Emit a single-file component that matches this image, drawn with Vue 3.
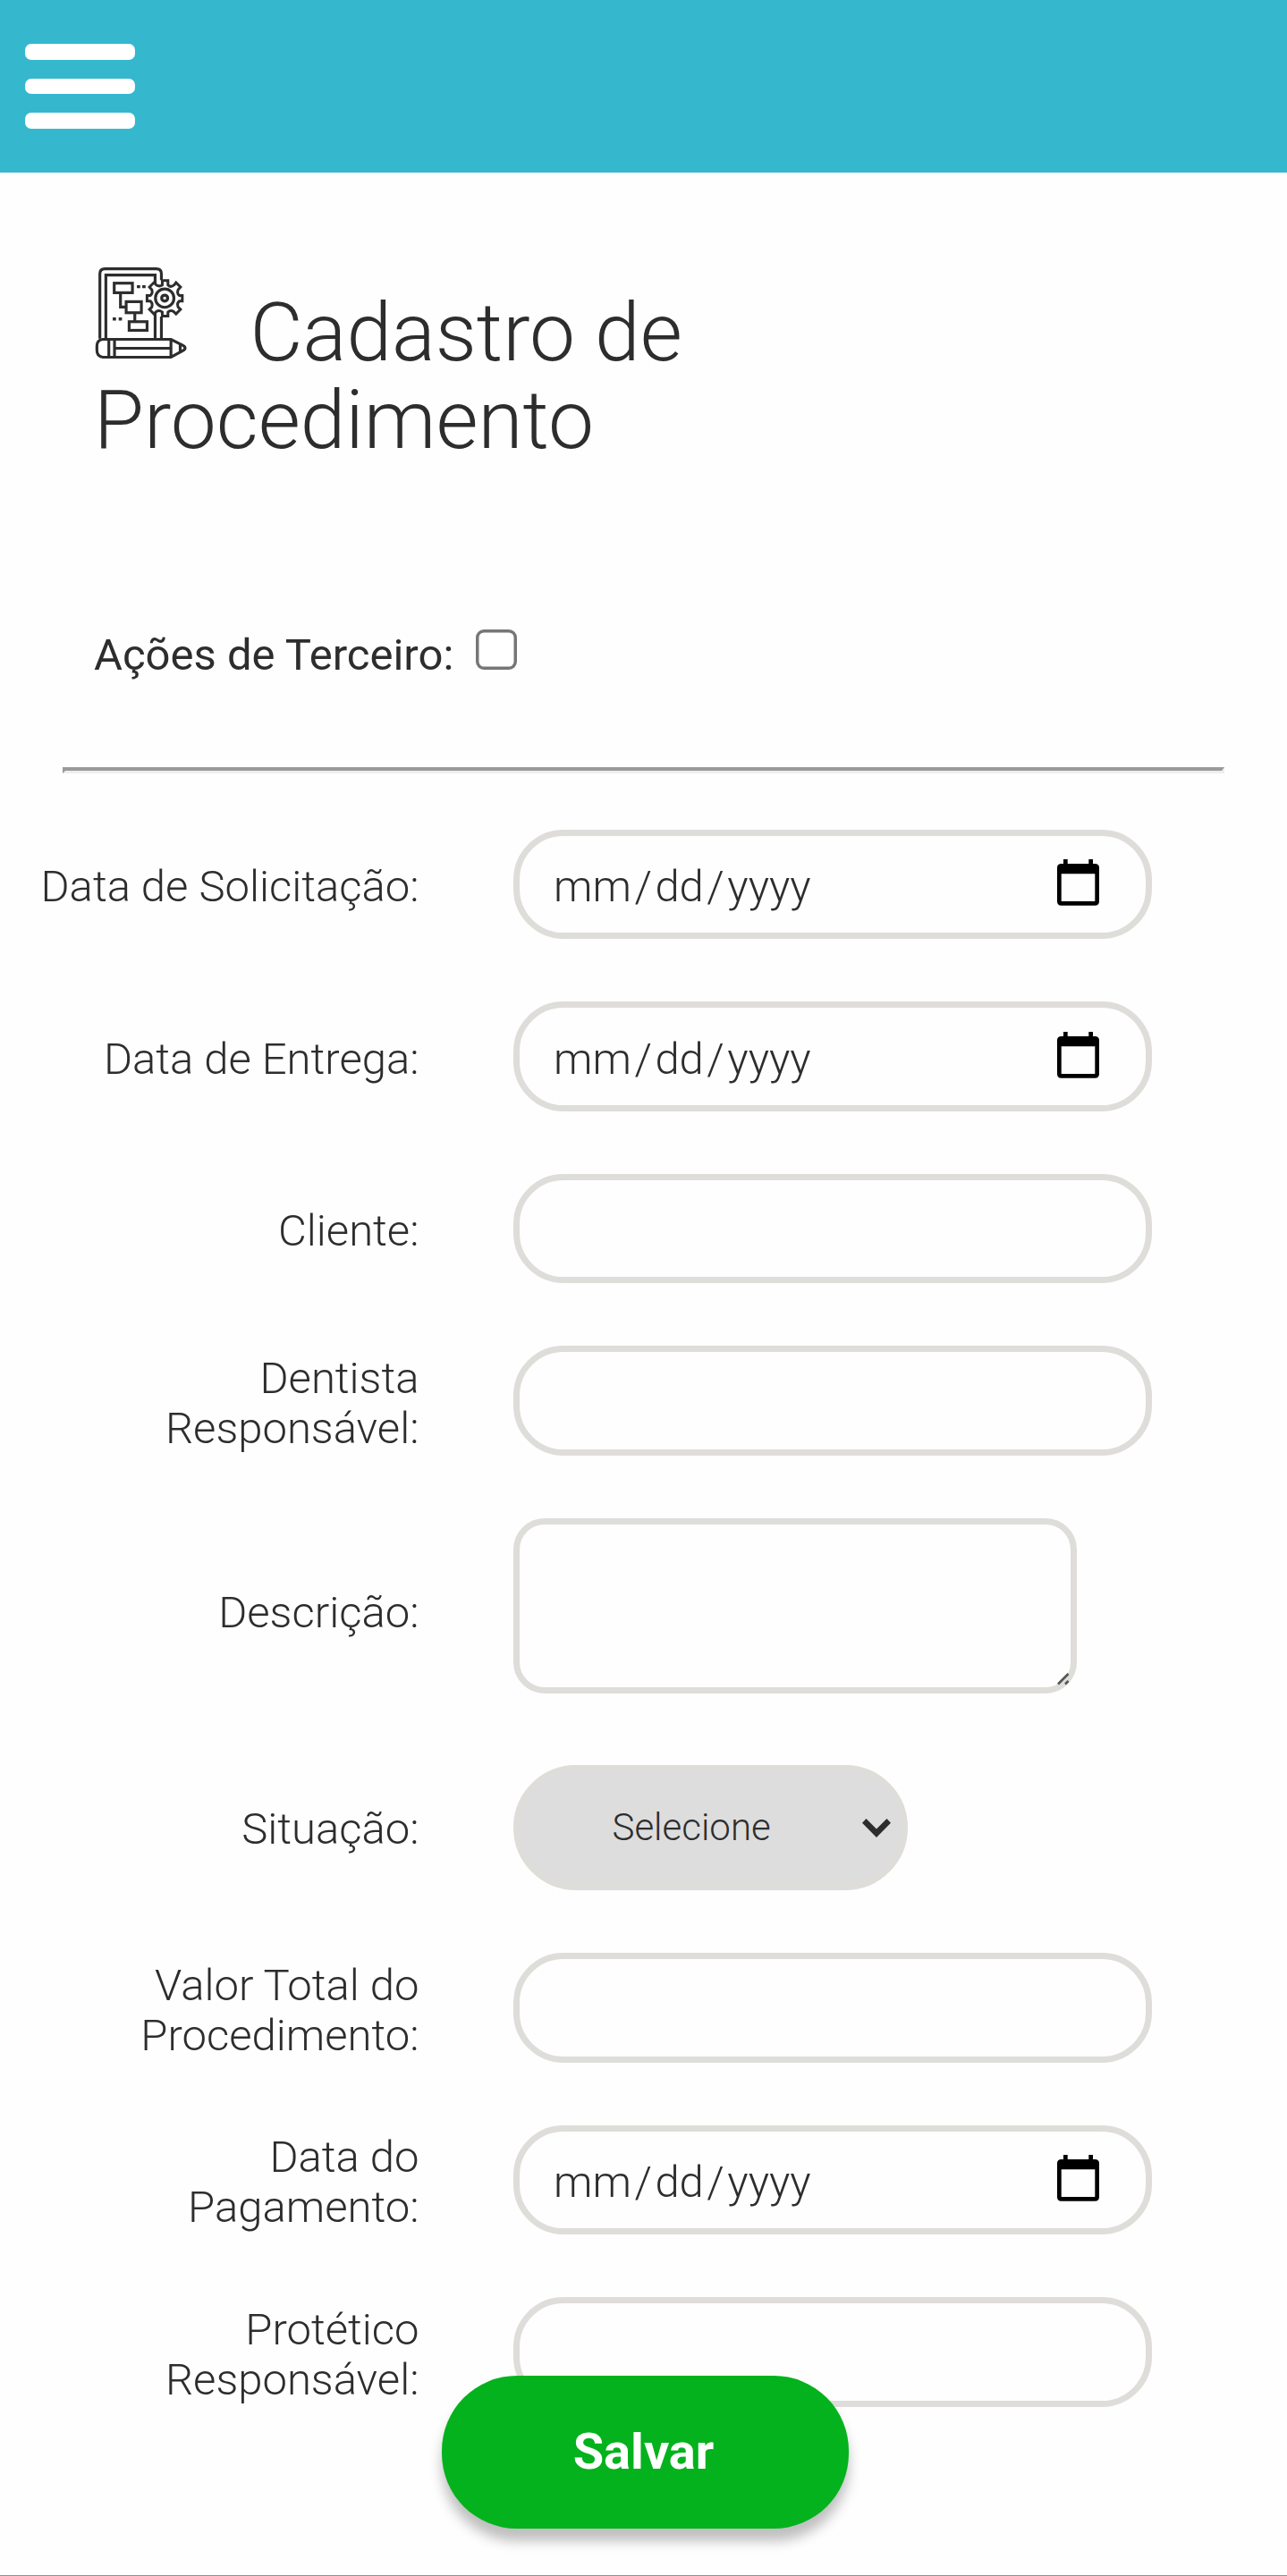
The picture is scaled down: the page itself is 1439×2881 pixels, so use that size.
<script setup>
const fields = [
  { label: 'Data de Solicitação:', type: 'date' },
  { label: 'Data de Entrega:', type: 'date' },
  { label: 'Cliente:', type: 'text' },
  { label: 'Dentista Responsável:', type: 'text' },
  { label: 'Descrição:', type: 'area' },
  { label: 'Situação:', type: 'select' },
  { label: 'Valor Total do Procedimento:', type: 'text' },
  { label: 'Data do Pagamento:', type: 'date' },
  { label: 'Protético Responsável:', type: 'text' },
]
</script>

<template>
  <div class="page">
    <header class="topbar">
      <button class="menu" aria-label="Menu">
        <span class="bar"></span>
        <span class="bar"></span>
        <span class="bar"></span>
      </button>
    </header>

    <h1 class="title">
      <svg class="title-icon" viewBox="48 54 310 310" fill="none" stroke="#2d2d2d" stroke-width="9.500">
        <path d="M65 296V79Q65 62 82 62H254Q271 62 271 79V100M271 222V296" />
        <path d="M85 296V83H250V120M250 203V296" />
        <rect x="113" y="110" width="61" height="32" />
        <rect x="153" y="172" width="51" height="37" />
        <rect x="163" y="239" width="60" height="29" />
        <path d="M134 145V190H150M182 212V237" />
        <path d="M189 122H200M207 122H218M108 230H119M128 230H139" stroke-width="10" />
        <path
          fill="#fefefe"
          stroke-width="9"
          d="M274 101H293V116Q302 126 314 116L320 108L335 123L327 132Q322 145 331 151H341V170H331Q322 177 327 190L335 198L320 213L312 205Q301 199 293 207V220H274V207Q264 199 254 205L246 213L231 198L239 190Q243 177 234 170H223V151H234Q243 145 239 132L231 123L246 108L254 116Q264 123 274 116Z"
        />
        <circle cx="282" cy="160" r="31" />
        <circle cx="282" cy="160" r="10" stroke-width="10" />
        <path d="M75 298H303L342 318Q359 327 342 337L303 358H75Q55 356 55 335V320Q55 300 75 298Z" />
        <path d="M95 298V358M114 298V358M303 298V358M114 328H303M334 314V341" />
      </svg><span class="title-first">Cadastro de</span><br />Procedimento
    </h1>

    <div class="third-party">
      <span>Ações de Terceiro:</span>
      <span class="checkbox" role="checkbox" aria-checked="false"></span>
    </div>

    <div class="rule"></div>

    <form class="form">
      <div v-for="f in fields" :key="f.label" class="row">
        <div class="label" :class="f.type">{{ f.label }}</div>
        <div v-if="f.type === 'date'" class="input date-input">
          <span class="part">mm</span><span>/</span><span class="part">dd</span><span>/</span><span class="part">yyyy</span>
          <svg class="calendar" viewBox="0 0 47 52">
            <path
              fill-rule="evenodd"
              d="M7 0h4.700v5h23.600V0H40v5h2.300Q47 5 47 9.500V47Q47 51.700 42.300 51.700H4.700Q0 51.700 0 47V9.500Q0 5 4.700 5H7ZM4.700 16.300V47H42.300V16.300Z"
            />
          </svg>
        </div>
        <div v-else-if="f.type === 'area'" class="textarea">
          <svg class="grip" viewBox="0 0 14 14" stroke="#555" stroke-width="2.600">
            <path d="M1 12.500L12.500 1M9 12.500L12.500 9" />
          </svg>
        </div>
        <div v-else-if="f.type === 'select'" class="dropdown">
          <span>Selecione</span>
          <svg class="chevron" viewBox="0 0 32 21">
            <path fill="#2d2d2d" d="M4.500 0L16 11.500L27.500 0L32 4.800L16 21L0 4.800Z" />
          </svg>
        </div>
        <div v-else class="input"></div>
      </div>
    </form>

    <button class="save">Salvar</button>
  </div>
</template>

<style>
body {
  margin: 0;
  background: #fefefe;
}
</style>

<style scoped>
.page {
  position: relative;
  box-sizing: border-box;
  width: 1439px;
  height: 2881px;
  overflow: hidden;
  background: #fefefe;
  border-bottom: 1px solid #35b7cd;
  color: #2d2d2d;
  font-family: Roboto, sans-serif;
  font-size: 49px;
  font-weight: 300;
  line-height: 56px;
}

.topbar {
  box-sizing: border-box;
  height: 192.5px;
  padding: 49px 28px;
  background: #35b7cd;
}

.menu {
  display: flex;
  flex-direction: column;
  gap: 21px;
  padding: 0;
  border: 0;
  background: none;
}

.bar {
  width: 122.5px;
  height: 17.5px;
  border-radius: 7px;
  background: #fff;
}

.title {
  height: 204px;
  margin: 105px 105px 0;
  font-size: 91px;
  font-weight: 300;
  line-height: 98px;
  padding-top: 25px;
  box-sizing: border-box;
}

.title-icon {
  width: 103.5px;
  height: 103.5px;
  margin: -30px 0 0 1px;
  vertical-align: 1px;
}

.title-first {
  margin-left: 70px;
}

.third-party {
  display: flex;
  align-items: flex-start;
  height: 56px;
  margin: 203px 0 0 105px;
  font-weight: 400;
}

.checkbox {
  width: 45.5px;
  height: 45.5px;
  margin: -1px 0 0 25px;
  border-radius: 9px;
  background: #fff;
  box-shadow: inset 0 0 0 3.5px #767676;
}

.rule {
  box-sizing: border-box;
  height: 7px;
  margin: 97px 70px 0;
  border-style: solid;
  border-width: 4px 3px 3px;
  border-color: #9a9a9a #eee #eee #9a9a9a;
}

.form {
  display: flex;
  flex-direction: column;
  gap: 70px;
  margin-top: 63px;
}

.row {
  display: grid;
  grid-template-columns: 468.5px 714px;
  column-gap: 105.5px;
  align-items: center;
  min-height: 122.5px;
}

.label {
  padding-top: 7px;
  margin: -10px 0 -10px 40px;
  text-align: right;
}

.label.area {
  padding-top: 6px;
}

.label.select {
  padding-top: 3px;
}

.input {
  box-sizing: border-box;
  height: 122.5px;
  border: 7px solid #deddd9;
  border-radius: 56px;
}

.date-input {
  display: flex;
  align-items: center;
  padding: 7px 52px 0 34.5px;
}

.part {
  padding: 0 3.5px;
}

.calendar {
  width: 47px;
  height: 52px;
  margin: -10px 0 0 auto;
}

.textarea {
  position: relative;
  box-sizing: border-box;
  width: 630px;
  height: 196px;
  margin-bottom: 10.5px;
  border: 7px solid #deddd9;
  border-radius: 35px;
}

.grip {
  position: absolute;
  right: 1px;
  bottom: 2px;
  width: 14px;
  height: 14px;
}

.dropdown {
  box-sizing: border-box;
  display: flex;
  align-items: center;
  justify-content: space-between;
  width: 441px;
  height: 140px;
  padding: 0 12px 0 103.5px;
  border: 7px solid #deddd9;
  border-radius: 70px;
  background: #ddd;
  font-size: 42px;
}

.chevron {
  width: 32px;
  height: 21px;
}

.save {
  position: absolute;
  left: 493.5px;
  top: 2656.5px;
  width: 455px;
  height: 171.5px;
  padding: 0 3px 0 0;
  border: 0;
  border-radius: 84px;
  background: #03b21c;
  box-shadow: 0 14px 14px rgba(0, 0, 0, 0.25);
  color: #fff;
  font-family: inherit;
  font-size: 56px;
  font-weight: 700;
}
</style>
